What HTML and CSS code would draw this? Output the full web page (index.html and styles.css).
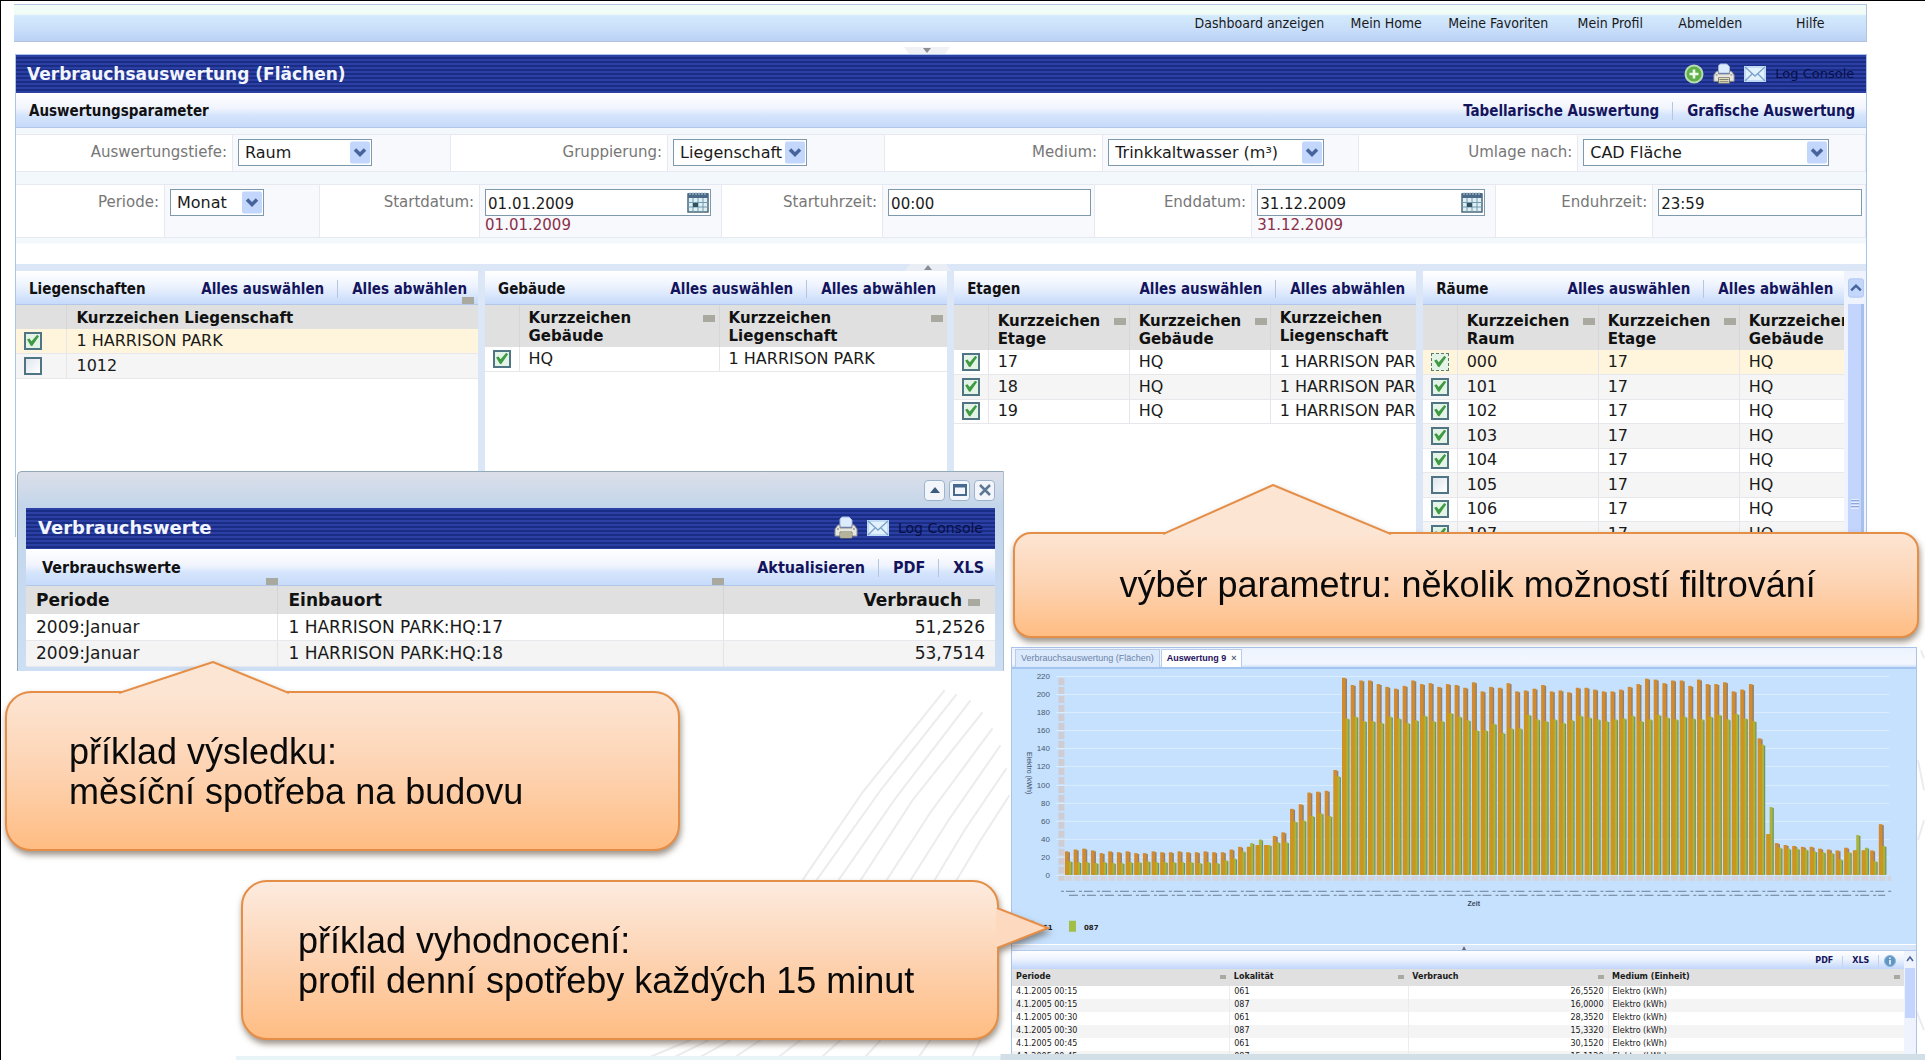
FILE: index.html
```html
<!DOCTYPE html>
<html lang="de">
<head>
<meta charset="utf-8">
<title>Verbrauchsauswertung (Flächen)</title>
<link rel="stylesheet" href="styles.css">
</head>
<body>
<svg class="defs" aria-hidden="true">
  <symbol id="i-plus" viewBox="0 0 20 20"><circle cx="10" cy="10" r="8.500" fill="#5fb04a" stroke="#b9dcae" stroke-width="2"/><path d="M10 5.500v9M5.500 10h9" stroke="#eefbe8" stroke-width="2.600"/></symbol>
  <symbol id="i-print" viewBox="0 0 24 24"><path d="M6 11V3l2-2h7l3 3v7z" fill="#dcecfc" stroke="#9db4d6"/><path d="M1 20v-7l3-4h2v3h12V9h2l3 4v7z" fill="#e6e6de" stroke="#8d9097"/><path d="M6 16h12v6H6z" fill="#f3efc6" stroke="#77776c"/><path d="M3 13h2M19 13h2M7 18h10M7 20h10" stroke="#77776c"/></symbol>
  <symbol id="i-mail" viewBox="0 0 22 16"><path d="M1 1h20v14H1z" fill="#e3f1fd" stroke="#c1daf6" stroke-width="2"/><path d="M1 1l10 9L21 1M1 15l7-7M21 15l-7-7" fill="none" stroke="#7ba3cd" stroke-width="1.4"/></symbol>
  <symbol id="i-cal" viewBox="0 0 22 22"><path d="M1 3h20v18H1z" fill="#dfeef3" stroke="#4a6a7c" stroke-width="1.5"/><path d="M1 2h20v5H1z" fill="#4a6a88"/><path d="M3 1v3M6 1v3M9 1v3M12 1v3M15 1v3M18 1v3" stroke="#b9cfdc"/><path d="M1 11.500h20M1 16h20M6 7v14M11 7v14M16 7v14" stroke="#6f9bad"/><path d="M6 12h5v4H6z" fill="#33505f"/></symbol>
  <symbol id="i-down" viewBox="0 0 20 22"><rect width="20" height="22" rx="2" fill="#c3d6fb"/><path d="M5 8l5 5 5-5" fill="none" stroke="#46639b" stroke-width="3.500"/></symbol>
  <symbol id="i-up" viewBox="0 0 20 24"><rect x=".5" y=".5" width="19" height="23" rx="3" fill="#c3d6fb" stroke="#aac3ef"/><path d="M4 15l6-6 6 6" fill="none" stroke="#46639b" stroke-width="3"/></symbol>
  <symbol id="i-info" viewBox="0 0 12 12"><circle cx="6" cy="6" r="5.500" fill="#5f96c4" stroke="#8db5d6"/><path d="M6 2.500v1.500M6 5v4.500" stroke="#fff" stroke-width="1.500"/></symbol>
</svg>

<div class="slide">
  <svg class="backdrop" viewBox="0 0 1925 1060" preserveAspectRatio="none" aria-hidden="true">
    <g stroke="#ececef" stroke-width="2" fill="none">
      <path d="M944 690L862 792L802 880"/><path d="M956 694L880 790L816 880"/><path d="M970 700L895 798L838 880"/><path d="M982 712L912 800L860 880"/><path d="M992 728L930 812L886 880"/><path d="M1000 745L948 820L910 880"/><path d="M1006 768L964 830L934 880"/><path d="M1009 795L980 840L956 880"/>
      <path d="M690 1040l-48 20M708 1040l-40 20M730 1040l-36 20M760 1040l-30 20M800 1040l-26 20M840 1040l-22 20M880 1040l-18 20M930 1040l-14 20M980 1040l-10 20M1921 650l3 8M1918 760l6 30M1918 840l6-20M1916 1010l8 20"/>
    </g>
    <path d="M235 1056H1925V1060H235z" fill="#e8f4f7"/>
    <path d="M1000 1054H1925V1060H1000z" fill="#d3dfe6"/>
  </svg>

  <main class="app">
    <nav class="topnav">
      <a href="#">Dashboard anzeigen</a><a href="#">Mein Home</a><a href="#">Meine Favoriten</a><a href="#">Mein Profil</a><a href="#">Abmelden</a><a href="#">Hilfe</a>
    </nav>
    <div class="grip grip-top"><svg width="46" height="7" viewBox="0 0 46 7"><path d="M0 0h46l-5 7H5z" fill="#f0f1f4"/><path d="M19 1h8l-4 5z" fill="#8a8d93"/></svg></div>

    <section class="frame">
      <header class="titlebar">
        <h1>Verbrauchsauswertung (Flächen)</h1>
        <div class="tools">
          <svg width="20" height="20"><use href="#i-plus"/></svg>
          <svg width="22" height="22"><use href="#i-print"/></svg>
          <svg width="22" height="16"><use href="#i-mail"/></svg>
          <a href="#">Log Console</a>
        </div>
      </header>
      <div class="bar">
        <h2>Auswertungsparameter</h2>
        <div class="links"><a href="#">Tabellarische Auswertung</a><a href="#">Grafische Auswertung</a></div>
      </div>

      <form class="params">
        <div class="row row-a">
          <label for="tiefe">Auswertungstiefe:</label>
          <div class="cell"><div class="select"><select id="tiefe"><option>Raum</option></select><svg><use href="#i-down"/></svg></div></div>
          <label for="gruppe">Gruppierung:</label>
          <div class="cell"><div class="select"><select id="gruppe"><option>Liegenschaft</option></select><svg><use href="#i-down"/></svg></div></div>
          <label for="medium">Medium:</label>
          <div class="cell"><div class="select wide"><select id="medium"><option>Trinkkaltwasser (m³)</option></select><svg><use href="#i-down"/></svg></div></div>
          <label for="umlage">Umlage nach:</label>
          <div class="cell"><div class="select wider"><select id="umlage"><option>CAD Fläche</option></select><svg><use href="#i-down"/></svg></div></div>
        </div>
        <div class="row row-b">
          <label for="periode">Periode:</label>
          <div class="cell"><div class="select small"><select id="periode"><option>Monat</option></select><svg><use href="#i-down"/></svg></div></div>
          <label for="sd">Startdatum:</label>
          <div class="cell date"><div class="field"><input id="sd" type="text" value="01.01.2009"><svg><use href="#i-cal"/></svg></div><span class="note">01.01.2009</span></div>
          <label for="sz">Startuhrzeit:</label>
          <div class="cell time"><div class="field"><input id="sz" type="text" value="00:00"></div></div>
          <label for="ed">Enddatum:</label>
          <div class="cell date"><div class="field"><input id="ed" type="text" value="31.12.2009"><svg><use href="#i-cal"/></svg></div><span class="note">31.12.2009</span></div>
          <label for="ez">Enduhrzeit:</label>
          <div class="cell time"><div class="field"><input id="ez" type="text" value="23:59"></div></div>
        </div>
      </form>

      <div class="grip grip-mid"><svg width="46" height="7" viewBox="0 0 46 7"><path d="M5 0h36l5 7H0z" fill="#e9edf4"/><path d="M19 6h8l-4-5z" fill="#8a8d93"/></svg></div>

      <div class="panels">
        <section class="panel">
          <div class="bar"><h3>Liegenschaften</h3><div class="links"><a href="#">Alles auswählen</a><a href="#">Alles abwählen</a></div><i class="mark mark-end"></i></div>
          <table class="list one">
            <thead><tr><th></th><th>Kurzzeichen Liegenschaft</th></tr></thead>
            <tbody>
              <tr class="sel"><td><input type="checkbox" aria-label="1 HARRISON PARK" checked></td><td>1 HARRISON PARK</td></tr>
              <tr><td><input type="checkbox" aria-label="1012"></td><td>1012</td></tr>
            </tbody>
          </table>
        </section>
        <section class="panel">
          <div class="bar"><h3>Gebäude</h3><div class="links"><a href="#">Alles auswählen</a><a href="#">Alles abwählen</a></div></div>
          <table class="list two">
            <thead><tr><th></th><th><div>Kurzzeichen Gebäude<i class="mark"></i></div></th><th><div>Kurzzeichen Liegenschaft<i class="mark"></i></div></th></tr></thead>
            <tbody><tr><td><input type="checkbox" aria-label="HQ" checked></td><td>HQ</td><td>1 HARRISON PARK</td></tr></tbody>
          </table>
        </section>
        <section class="panel">
          <div class="bar"><h3>Etagen</h3><div class="links"><a href="#">Alles auswählen</a><a href="#">Alles abwählen</a></div></div>
          <table class="list three">
            <thead><tr><th></th><th><div>Kurzzeichen Etage<i class="mark"></i></div></th><th><div>Kurzzeichen Gebäude<i class="mark"></i></div></th><th>Kurzzeichen Liegenschaft</th></tr></thead>
            <tbody>
              <tr><td><input type="checkbox" aria-label="17" checked></td><td>17</td><td>HQ</td><td>1 HARRISON PARK</td></tr>
              <tr><td><input type="checkbox" aria-label="18" checked></td><td>18</td><td>HQ</td><td>1 HARRISON PARK</td></tr>
              <tr><td><input type="checkbox" aria-label="19" checked></td><td>19</td><td>HQ</td><td>1 HARRISON PARK</td></tr>
            </tbody>
          </table>
        </section>
        <section class="panel">
          <div class="bar"><h3>Räume</h3><div class="links"><a href="#">Alles auswählen</a><a href="#">Alles abwählen</a></div></div>
          <table class="list three rooms">
            <thead><tr><th></th><th><div>Kurzzeichen Raum<i class="mark"></i></div></th><th><div>Kurzzeichen Etage<i class="mark"></i></div></th><th><div>Kurzzeichen Gebäude</div></th></tr></thead>
            <tbody>
              <tr class="sel"><td><input type="checkbox" class="focus" aria-label="000" checked></td><td>000</td><td>17</td><td>HQ</td></tr>
              <tr><td><input type="checkbox" aria-label="101" checked></td><td>101</td><td>17</td><td>HQ</td></tr>
              <tr><td><input type="checkbox" aria-label="102" checked></td><td>102</td><td>17</td><td>HQ</td></tr>
              <tr><td><input type="checkbox" aria-label="103" checked></td><td>103</td><td>17</td><td>HQ</td></tr>
              <tr><td><input type="checkbox" aria-label="104" checked></td><td>104</td><td>17</td><td>HQ</td></tr>
              <tr><td><input type="checkbox" aria-label="105"></td><td>105</td><td>17</td><td>HQ</td></tr>
              <tr><td><input type="checkbox" aria-label="106" checked></td><td>106</td><td>17</td><td>HQ</td></tr>
              <tr><td><input type="checkbox" aria-label="107" checked></td><td>107</td><td>17</td><td>HQ</td></tr>
            </tbody>
          </table>
        </section>
        <div class="scroll"><svg width="18" height="24"><use href="#i-up"/></svg><div class="thumb"><i></i></div></div>
      </div>
    </section>
  </main>

  <section class="popup">
    <div class="wincontrols">
      <button type="button" aria-label="Einklappen"><svg width="12" height="12" viewBox="0 0 12 12"><path d="M1 9h10L6 3z" fill="#3c5a80"/></svg></button>
      <button type="button" aria-label="Maximieren"><svg width="14" height="12" viewBox="0 0 14 12"><path d="M1 1h12v10H1z" fill="none" stroke="#47688f" stroke-width="2"/><path d="M1 2h12" stroke="#47688f" stroke-width="3"/></svg></button>
      <button type="button" aria-label="Schließen"><svg width="12" height="12" viewBox="0 0 12 12"><path d="M1 1l10 10M11 1L1 11" stroke="#5d7896" stroke-width="2.500"/></svg></button>
    </div>
    <div class="winbody">
      <header class="titlebar">
        <h2>Verbrauchswerte</h2>
        <div class="tools">
          <svg width="24" height="24"><use href="#i-print"/></svg>
          <svg width="22" height="16"><use href="#i-mail"/></svg>
          <a href="#">Log Console</a>
        </div>
      </header>
      <div class="bar">
        <h3>Verbrauchswerte</h3>
        <div class="links"><a href="#">Aktualisieren</a><a href="#">PDF</a><a href="#">XLS</a></div>
        <i class="mark mark-c1"></i><i class="mark mark-c2"></i>
      </div>
      <table class="values">
        <thead><tr><th>Periode</th><th>Einbauort</th><th><span>Verbrauch</span><i class="mark"></i></th></tr></thead>
        <tbody>
          <tr><td>2009:Januar</td><td>1 HARRISON PARK:HQ:17</td><td>51,2526</td></tr>
          <tr><td>2009:Januar</td><td>1 HARRISON PARK:HQ:18</td><td>53,7514</td></tr>
        </tbody>
      </table>
    </div>
  </section>

  <section class="chartwin">
    <div class="tabs"><a href="#">Verbrauchsauswertung (Flächen)</a><a href="#" class="on">Auswertung 9<b>×</b></a></div>
    <svg class="chart" viewBox="0 0 905 275" role="img" aria-label="Elektro (kWh)">
      <g id="axis"></g><g id="bars"></g>
      <path d="M49.500 9V212" stroke="#cfcdd2" stroke-width="6" stroke-dasharray="7 2"/>
      <path d="M53 209.500H880" stroke="#d3d4dc" stroke-width="5" stroke-dasharray="6.666 2"/>
      <path d="M49 222.500H882" stroke="#6d8095" stroke-dasharray="3 2 9 4"/>
      <path d="M57 226.500H874" stroke="#6d8095" stroke-dasharray="9 4 3 2"/>
      <text class="ytitle" transform="translate(15 83) rotate(90)">Elektro (kWh)</text>
      <text class="xtitle" x="456" y="237">Zeit</text>
      <rect x="15" y="252" width="7" height="11" fill="#d3922a"/><text class="legend" x="26" y="261">061</text>
      <rect x="57" y="252" width="7" height="11" fill="#a3be47"/><text class="legend" x="72" y="261">087</text>
    </svg>
    <div class="split"><svg width="8" height="4" viewBox="0 0 8 4"><path d="M2 4h4L4 0z" fill="#667"/></svg></div>
    <div class="data">
      <div class="datamain">
        <div class="minibar"><a href="#">PDF</a><a href="#">XLS</a><a href="#" aria-label="Info"><svg width="12" height="12"><use href="#i-info"/></svg></a></div>
        <table class="mini">
          <thead><tr><th><div>Periode<i class="mark"></i></div></th><th><div>Lokalität<i class="mark"></i></div></th><th><div>Verbrauch<i class="mark"></i></div></th><th><div>Medium (Einheit)<i class="mark"></i></div></th></tr></thead>
          <tbody>
            <tr><td>4.1.2005 00:15</td><td>061</td><td>26,5520</td><td>Elektro (kWh)</td></tr>
            <tr><td>4.1.2005 00:15</td><td>087</td><td>16,0000</td><td>Elektro (kWh)</td></tr>
            <tr><td>4.1.2005 00:30</td><td>061</td><td>28,3520</td><td>Elektro (kWh)</td></tr>
            <tr><td>4.1.2005 00:30</td><td>087</td><td>15,3320</td><td>Elektro (kWh)</td></tr>
            <tr><td>4.1.2005 00:45</td><td>061</td><td>30,1520</td><td>Elektro (kWh)</td></tr>
            <tr><td>4.1.2005 00:45</td><td>087</td><td>15,1120</td><td>Elektro (kWh)</td></tr>
          </tbody>
        </table>
      </div>
      <div class="miniscroll"><svg width="10" height="14" viewBox="0 0 10 14"><path d="M2 9l3-4 3 4" fill="none" stroke="#46639b" stroke-width="1.500"/></svg><div class="minithumb"></div></div>
    </div>
  </section>

  <aside class="callout c-result" lang="cs">
    <svg width="170" height="33" viewBox="0 0 170 33"><path d="M0 32L94 1L170 32V33H0z" fill="#fde5d3"/><path d="M0 32L94 1L170 32" fill="none" stroke="#e58e47" stroke-width="2"/></svg>
    <p>příklad výsledku:<br>měsíční spotřeba na budovu</p>
  </aside>
  <aside class="callout c-filter" lang="cs">
    <svg width="228" height="51" viewBox="0 0 228 51"><path d="M0 50L110 1L228 50V51H0z" fill="#fde5d3"/><path d="M0 50L110 1L228 50" fill="none" stroke="#e58e47" stroke-width="2"/></svg>
    <p>výběr parametru: několik možností filtrování</p>
  </aside>
  <aside class="callout c-profile" lang="cs">
    <svg width="54" height="40" viewBox="0 0 54 40"><path d="M0 0H2L52 20L2 40H0z" fill="#fdd9c0"/><path d="M1 0L52 20L1 40" fill="none" stroke="#e58e47" stroke-width="2"/></svg>
    <p>příklad vyhodnocení:<br>profil denní spotřeby každých 15 minut</p>
  </aside>
</div>
<script src="chart.js"></script>
</body>
</html>
```
FILE: chart.js
```js
// Quarter-hour load profile: [meter 061, meter 087] in kWh.
const profile = [
  [26,15],[28,14],[29,14],[27,13],[24,14],[26,13],[25,13],[26,14],[24,14],[24,15],
  [26,14],[25,14],[25,14],[26,14],[25,14],[25,13],[26,14],[25,13],[25,16],[28,18],
  [31,26],[31,35],[33,39],[33,33],[43,36],[47,36],[73,59],[78,60],[91,65],[92,68],
  [93,65],[116,109],[218,173],[210,175],[215,170],[215,170],[211,168],[208,175],[206,173],[209,168],
  [215,171],[211,176],[212,170],[208,170],[211,179],[210,175],[207,171],[213,160],[203,160],[208,167],
  [207,157],[212,162],[203,162],[204,177],[206,172],[210,170],[203,172],[204,168],[202,171],[207,176],
  [207,174],[205,172],[203,170],[203,172],[205,173],[208,176],[211,170],[217,172],[216,177],[212,174],
  [215,172],[215,175],[209,173],[216,172],[211,175],[211,177],[213,172],[203,178],[205,173],[211,170],
  [151,144],[45,75],[35,30],[33,29],[32,29],[31,28],[31,26],[29,25],[28,24],[27,17],
  [30,25],[27,44],[27,30],[27,15],[56,32]
];
const base = 206, left = 53, right = 878;
const scale = 199 / 220;
const step = (right - left) / (profile.length + 0.2);

let axis = '';
for (let v = 0; v <= 220; v += 20) {
  const y = Math.round(base - v * scale);
  axis += `<path d="M44 ${y}.5H878" stroke="#dcedfe"/><text class="tick" x="38" y="${y + 3}">${v}</text>`;
}
document.getElementById('axis').innerHTML = axis;

const bar = (x, value, width, fill) => {
  const h = value * scale;
  return `<rect x="${x.toFixed(1)}" y="${(base - h).toFixed(1)}" width="${width}" height="${h.toFixed(1)}" fill="${fill}"/>`;
};
document.getElementById('bars').innerHTML = profile.map(([a, b], i) => {
  const x = left + i * step;
  return bar(x + 1, a - 1, 4, '#8c8278') + bar(x, a, 3.6, '#d38a2c') +
         bar(x + 4.6, b - 1, 3, '#6f9468') + bar(x + 3.4, b, 3, '#aab43a') +
         bar(x + 0.6, Math.min(a, b), 3.8, '#cb961f');
}).join('');
```
FILE: styles.css
```css
* { box-sizing: border-box; }
body { margin: 0; font: 15px/18px "DejaVu Sans", Verdana, sans-serif; color: #1a1a1a; background: #fff; }
h1, h2, h3, p { margin: 0; }
a { color: inherit; text-decoration: none; }
svg { display: block; }
.defs { position: absolute; width: 0; height: 0; }

.slide { position: relative; min-height: 100vh; border-top: 1px solid #000; border-left: 1px solid #000; overflow: hidden; padding: 3px 3% 0 13px; }
.backdrop { position: absolute; left: 0; top: 0; width: 100%; height: 100%; }
.app { position: relative; }

/* top navigation */
.topnav { display: flex; justify-content: flex-end; align-items: center; height: 38px; padding-right: 6px; border: 1px solid #b4c3de; border-left: 0; background: linear-gradient(#f2fcf6 0 25%, #d3eafc 30%, #c9dffa 65%, #bbd1f4); font: 14px/18px "DejaVu Sans Condensed", Tahoma, sans-serif; }
.topnav a { padding: 0 12px; min-width: 100px; text-align: center; }
.grip { display: flex; justify-content: center; padding-right: 27px; }
.grip-top { height: 12px; padding-top: 5px; }
.grip-mid { height: 7px; background: #dbe6f7; }

.frame { margin-left: 1px; border: 1px solid #a9c3ea; border-bottom: 0; background: #fff; }
.titlebar { display: flex; align-items: center; justify-content: space-between; height: 38px; padding: 0 12px 0 11px; background: repeating-linear-gradient(#2c3fa5 0 2px, #192d85 2px 4px); color: #f2f5ff; }
.titlebar h1 { font-size: 17px; line-height: 24px; }
.titlebar h2 { font-size: 18px; line-height: 24px; }
.tools { display: flex; align-items: center; gap: 9px; }
.tools a { color: #080f47; font-size: 13px; }

.bar { position: relative; display: flex; align-items: center; justify-content: space-between; height: 35px; padding: 2px 11px 0 13px; border-bottom: 1px solid #b3c8e8; background: linear-gradient(#fff, #f1f4fd 45%, #d5e5fc 65%, #c6dafa); font: bold 15px/18px "DejaVu Sans Condensed", Tahoma, sans-serif; }
.bar h2, .bar h3 { font: inherit; color: #111; }
.links { display: flex; color: #14145c; }
.links a + a { margin-left: 13px; padding-left: 14px; border-left: 1px solid #b5c6de; }
.mark { display: inline-block; flex: none; width: 12px; height: 7px; background: #a9a99f; }
.mark-end { position: absolute; right: 4px; bottom: 0; }

/* parameter form */
.params { padding: 6px 0 26px; background: linear-gradient(#f3f8fd 0 115px, #fff 116px); }
.row { display: grid; border-top: 1px solid #e6e9f0; border-bottom: 1px solid #e6e9f0; background: #fff; }
.row-a { height: 38px; margin-bottom: 12px; grid-template-columns: 216fr 219fr 216fr 218fr 217fr 257fr 218fr 289fr; }
.row-b { height: 54px; grid-template-columns: 148fr 156fr 159fr 243fr 160fr 213fr 156fr 245fr 156fr 214fr; }
.row > * { min-width: 0; }
.row label { padding: 8px 5px 0 0; text-align: right; color: #777; }
.cell { padding: 4px 5px 0; border-left: 1px solid #e6e9f0; border-right: 1px solid #e6e9f0; background: #f8f9fd; }
.cell.date { padding-right: 10px; }
.cell.time { padding-right: 3px; }
.select { position: relative; width: 134px; }
.select.small { width: 94px; }
.select.wide { width: 216px; }
.select.wider { width: 246px; }
.select svg { position: absolute; right: 2px; top: 2px; width: 20px; height: 23px; pointer-events: none; }
select, .field input { display: block; width: 100%; height: 27px; margin: 0; border: 1px solid #7e99ac; border-radius: 0; background: #fff; color: #1a1a1a; font: 15px/20px "DejaVu Sans", Verdana, sans-serif; appearance: none; }
select { padding: 0 0 0 6px; font-size: 16px; }
.field { position: relative; }
.field input { padding: 2px 2px 0; }
.field svg { position: absolute; right: 2px; top: 2px; width: 22px; height: 22px; pointer-events: none; }
.note { display: block; color: #8a3048; line-height: 18px; }

/* selection panels */
.panels { position: relative; display: grid; grid-template-columns: 462fr 462fr 462fr 421fr 15px; column-gap: 7px; height: 266px; background: #dbe6f7; }
.panels .scroll { margin-left: -7px; }
.panel { min-width: 0; overflow: hidden; background: #fff; }
.panel .bar { height: 34px; background: linear-gradient(#fff, #edf3fe 45%, #c6dafa); }
.list { width: 100%; border-collapse: collapse; table-layout: fixed; font-size: 16px; }
.rooms.list { width: 457px; }
.list th { padding: 4px 0 2px 9px; background: #e0e0e0; text-align: left; vertical-align: top; font-size: 15px; line-height: 18px; border-left: 1px solid #d6d6d6; color: #111; }
.list th:first-child, .list td:first-child { border-left: 0; padding: 0 0 0 8px; }
.three th > div { padding-top: 3px; }
.list th > div { display: flex; justify-content: space-between; gap: 4px; }
.list th .mark { margin: 6px 4px 0 0; }
.three th .mark { margin-right: 3px; }
.list td { height: 24px; padding: 0 0 0 9px; border-left: 1px solid #e6e6ea; border-bottom: 1px solid #e8e8ec; white-space: nowrap; overflow: hidden; }
.list tbody tr:nth-child(even) { background: #f5f5f5; }
.list tbody tr:nth-child(even) td { height: 25px; }
.list tbody tr.sel { background: #fff5dc; }
.list th:first-child { width: 34px; }
.one th:first-child { width: 50px; }
.two th:nth-child(2) { width: 200px; }
.three th:nth-child(2), .three th:nth-child(3) { width: 141px; }
.one td:nth-child(2), .one th:nth-child(2) { padding-left: 10px; }
input[type=checkbox] { display: block; appearance: none; width: 18px; height: 18px; margin: 0; border: 2px solid #4f7584; background: linear-gradient(135deg, #dfe6ee, #fff); }
input[type=checkbox]:checked { background: #e3f3e6; }
input[type=checkbox]:checked::before { content: ""; display: block; width: 12px; height: 12px; margin: 1px; background: #3f9a43; clip-path: polygon(0 40%, 20% 32%, 38% 55%, 85% 0, 100% 12%, 42% 95%, 30% 90%); }
input[type=checkbox].focus { border: 1px dashed #5b7a70; padding: 1px; }
.scroll { padding: 5px 2px 0 4px; background: #eef3fd; }
.thumb { display: grid; place-items: center; height: 237px; margin-top: 4px; border-right: 3px solid #a9bfec; background: #c3d4fd; }
.scroll svg { width: 100%; }
.thumb i { width: 8px; height: 10px; margin-top: 162px; background: repeating-linear-gradient(#e6eefe 0 1px, #8fa8dc 1px 2px, #c3d4fd 2px 3px); }

/* result window */
.popup { position: absolute; left: 16px; top: 470px; width: 51.3%; padding: 0 8px 4px; border: 1px solid #93a9b8; border-bottom: 0; border-right: 1px solid #aebfd0; border-radius: 5px 0 0 0; background: linear-gradient(#dcdfe9, #c2d5ea 36px, #cddff5); }
.wincontrols { display: flex; justify-content: flex-end; align-items: center; gap: 4px; height: 36px; }
.wincontrols button { display: grid; place-items: center; width: 21px; height: 21px; padding: 0; border: 1px solid #9db3cc; border-radius: 4px; background: #f2f6fb; }
.popup .titlebar { height: 41px; padding: 0 12px 2px 12px; }
.popup .tools a { font-size: 14px; }
.popup .bar { height: 37px; padding: 2px 11px 0 16px; font-size: 16px; }
.mark-c1, .mark-c2 { position: absolute; bottom: 0; right: 74%; }
.mark-c2 { right: 28%; }
.values { width: 100%; border-collapse: collapse; table-layout: fixed; background: #fff; font-size: 17px; }
.values th { height: 28px; padding: 0 10px; background: #e0e0e0; text-align: left; border-left: 1px solid #d4d4d4; color: #111; }
.values td { height: 26px; padding: 0 10px; border-left: 1px solid #e4e4e4; border-bottom: 1px solid #e8e8ec; }
.values th:first-child, .values td:first-child { border-left: 0; width: 26%; }
.values th:nth-child(2) { width: 46%; }
.values th:last-child, .values td:last-child { text-align: right; }
.values th .mark { margin-left: 6px; }
.values th:last-child { padding-right: 15px; }
.values tbody tr:nth-child(even) { background: #f4f4f4; }

/* chart window */
.chartwin { position: absolute; left: 52.5%; top: 646px; width: 47.1%; border: 1px solid #a9c3ea; border-bottom: 0; background: #c5e1fe; }
.tabs { display: flex; align-items: flex-end; gap: 1px; height: 21px; padding: 0 3px; border-bottom: 2px solid #a3c5ef; background: linear-gradient(#eef4fe, #f2f7ff 16px, #cfe0f8); font: 9px/17px "Liberation Sans", Arial, sans-serif; }
.tabs a { padding: 0 5px; border: 1px solid #b8cdec; border-bottom: 0; background: #dbe9fc; color: #6a84a8; }
.tabs a.on { background: #fff; color: #25105c; font-weight: bold; }
.tabs b { padding-left: 5px; color: #567; }
.chart { width: 100%; height: auto; font: 8px "Liberation Sans", Arial, sans-serif; }
.tick { text-anchor: end; fill: #4a5b70; }
.ytitle { font-size: 7px; fill: #3c4c62; }
.xtitle { font-size: 7px; font-weight: bold; fill: #3c4c62; }
.legend { font: bold 7px "DejaVu Sans", sans-serif; fill: #222; }
.split { display: flex; justify-content: center; height: 7px; padding-top: 1px; border-top: 1px solid #fff; border-bottom: 1px solid #b4cbee; background: #d8e6fa; }
.data { display: flex; height: 103px; overflow: hidden; background: #fff; font-size: 8px; line-height: 10px; }
.datamain { flex: 1; min-width: 0; }
.minibar { display: flex; justify-content: flex-end; align-items: center; height: 18px; padding: 2px 8px 0 0; background: linear-gradient(#fff, #edf3fe 45%, #c0d6fa); font-weight: bold; color: #14145c; }
.minibar a + a { margin-left: 9px; padding-left: 9px; border-left: 1px solid #c3d2e8; }
.minibar a:last-child { padding-left: 5px; }
.mini { width: 100%; border-collapse: collapse; table-layout: fixed; }
.mini th { height: 17px; padding: 0 4px; background: #e0e0e0; text-align: left; }
.mini th > div { display: flex; align-items: center; justify-content: space-between; }
.mini .mark { width: 6px; height: 4px; }
.mini td { height: 13px; padding: 0 4px; border-left: 1px solid #ececec; white-space: nowrap; }
.mini td:first-child { border-left: 0; }
.mini th:first-child { width: 24.4%; }
.mini th:nth-child(2) { width: 20%; }
.mini th:nth-child(3) { width: 22.4%; }
.mini td:nth-child(3) { text-align: right; }
.mini tbody tr:nth-child(even) { background: #f4f4f4; }
.miniscroll { width: 12px; padding: 1px; background: #eef3fd; }
.minithumb { height: 50px; margin-top: 2px; background: #c3d4fd; }

/* speech bubbles */
.callout { position: absolute; display: flex; align-items: center; border: 2px solid #e58e47; border-radius: 26px; background: linear-gradient(#fde5d3, #fdd3b2 50%, #ffbd83); color: #0a0a0a; font: 36px/40px "Liberation Sans", Arial, sans-serif; filter: drop-shadow(1px 4px 3px rgba(60, 40, 20, .5)); }
.callout svg { position: absolute; }
.c-result { left: 4px; top: 690px; width: 35.1%; height: 160px; padding: 2px 0 0 62px; }
.c-result svg { left: 112px; bottom: calc(100% - 1px); }
.c-filter { left: 52.6%; top: 531px; width: 47.1%; height: 106px; padding-left: 3px; justify-content: center; border-radius: 18px; }
.c-filter svg { left: 148px; bottom: calc(100% - 1px); }
.c-profile { left: 240px; top: 879px; width: 39.4%; height: 160px; padding: 2px 0 0 55px; background: linear-gradient(#fdebdf, #fdd3b2 50%, #ffbd83); }
.c-profile svg { left: calc(100% - 1px); top: 26px; }
```
